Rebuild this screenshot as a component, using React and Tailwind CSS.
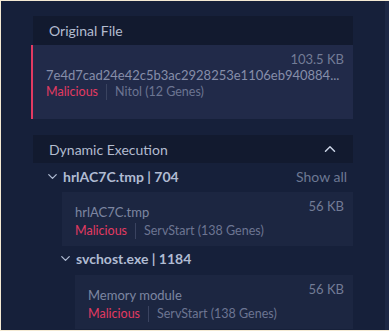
import { ChevronDown, ChevronUp } from "lucide-react";

function Verdict({ family, className = "" }) {
  return (
    <div className={"flex items-center text-[12.5px] leading-[16px] " + className}>
      <span className="text-[#e23a62]">Malicious</span>
      <span className="mx-[8px] h-[16px] w-px bg-[#3a4360]" />
      <span className="text-[#6c7592]">{family}</span>
    </div>
  );
}

function FileCard({ name, size, family, className }) {
  return (
    <div className={"bg-[#1c2641] pl-[13px] pr-[9px] pt-[6px] pb-[7px] " + className}>
      <div className="flex justify-between">
        <div className="pt-[5px] text-[13px] leading-[18px] text-[#7d86a1]">{name}</div>
        <div className="text-[13px] leading-[16px] text-[#737c96]">{size}</div>
      </div>
      <Verdict family={family} className="mt-[2px]" />
    </div>
  );
}

function ProcessRow({ label, right, className }) {
  return (
    <div className={"flex items-center justify-between h-[24px] " + className}>
      <div className="flex items-center gap-[3px] text-[14px] font-bold text-[#b0bbd2]">
        <ChevronDown className="w-[15px] h-[15px]" strokeWidth={2} />
        <span>{label}</span>
      </div>
      {right && <span className="text-[14px] text-[#6d7893] pr-[6px]">{right}</span>}
    </div>
  );
}

export default function App() {
  return (
    <div className="w-[389px] h-[331px] overflow-hidden flex bg-[#16203a] border-t border-l border-b border-[#f4ead4] font-['Lato',sans-serif]">
      <div className="flex-1 pl-[30px] pt-[15px]">
        <div className="w-[322px]">
          <div className="ml-[2px] h-[29px] bg-[#121a2f] flex items-center pl-[16px] text-[14px] text-[#b3bccf]">
            Original File
          </div>
          <div className="h-[74px] bg-[#212a49] border-l-2 border-[#e23a62] pl-[13px] pr-[9px] pt-[6px]">
            <div className="text-right text-[13px] leading-[16px] text-[#737c96]">103.5 KB</div>
            <div className="text-[13px] leading-[16px] text-[#868eaa] truncate">7e4d7cad24e42c5b3ac2928253e1106eb940884...</div>
            <Verdict family="Nitol (12 Genes)" className="mt-[1px]" />
          </div>

          <div className="mt-[16px] ml-[2px] h-[28px] bg-[#121a2f] flex items-center justify-between pl-[16px] pr-[14px] text-[14px] text-[#b3bccf]">
            <span>Dynamic Execution</span>
            <ChevronUp className="w-[18px] h-[18px] text-[#c9d2e4]" strokeWidth={2} />
          </div>
          <ProcessRow label="hrlAC7C.tmp | 704" right="Show all" className="ml-[14px] mt-[1px]" />
          <FileCard name="hrlAC7C.tmp" size="56 KB" family="ServStart (138 Genes)" className="ml-[31px] mt-[4px]" />
          <ProcessRow label="svchost.exe | 1184" className="ml-[27px]" />
          <FileCard name="Memory module" size="56 KB" family="ServStart (138 Genes)" className="ml-[44px] mt-[5px]" />
        </div>
      </div>
      <div className="w-[4px] bg-[#1d2845]" />
    </div>
  );
}
